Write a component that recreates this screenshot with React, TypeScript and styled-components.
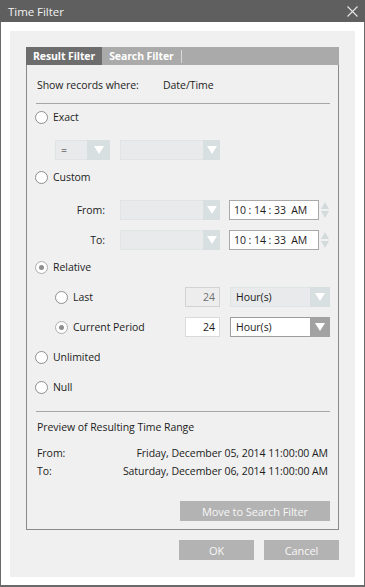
import React from 'react'
import styled, { createGlobalStyle } from 'styled-components'

const GlobalStyle = createGlobalStyle`
	body {
		margin: 0;
		background: #ffffff;
	}
`

const Window = styled.div`
	width: 365px;
	height: 587px;
	box-sizing: border-box;
	display: flex;
	flex-direction: column;
	background: #ffffff;
	border: 1px solid #6a6a6a;
	border-top: none;
	border-bottom-width: 2px;
	font-family: 'Open Sans', 'Noto Sans', sans-serif;
	font-size: 10.5px;
	letter-spacing: -0.05px;
	color: #1c1c1c;
`

const TitleBar = styled.div`
	height: 22px;
	margin: 0 -1px;
	padding: 0 7px 0 8px;
	display: flex;
	align-items: center;
	justify-content: space-between;
	background: #5f5f5f;
	color: #f2f2f2;
	font-size: 11.5px;
`

const Body = styled.div`
	flex: 1;
	padding: 9px 9px 8px 9px;
	display: flex;
`

const Panel = styled.div`
	flex: 1;
	background: #f0f0f0;
	padding: 16px 16px 0 16px;
	display: flex;
	flex-direction: column;
`

const TabHeader = styled.div`
	height: 18px;
	display: flex;
	align-items: stretch;
	background: #aaaaaa;
`

const Tab = styled.div<{ $active?: boolean }>`
	display: flex;
	align-items: center;
	padding: 0 7px 0 7px;
	background: ${(p) => (p.$active ? '#6d6d6d' : 'transparent')};
	color: #ffffff;
	font-weight: 700;
	font-size: 10.5px;
	letter-spacing: -0.1px;
`

const TabDivider = styled.div`
	width: 1px;
	margin: 3px 0 2px 0;
	background: #d8d8d8;
`

const Content = styled.div`
	height: 465px;
	box-sizing: border-box;
	border: 1px solid #8a8a8a;
	border-top: none;
	padding: 0 8px 8px 8px;
	display: flex;
	flex-direction: column;
`

const Row = styled.div<{ $mt?: number; $indent?: number; $h?: number }>`
	height: ${(p) => p.$h ?? 20}px;
	margin-top: ${(p) => p.$mt ?? 0}px;
	padding-left: ${(p) => p.$indent ?? 0}px;
	display: flex;
	align-items: center;
`

const TextRow = styled(Row)`
	padding-left: 2px;
	padding-right: 2px;
	justify-content: space-between;
`

const Separator = styled.div<{ $mt: number }>`
	height: 1px;
	margin: ${(p) => p.$mt}px 0 0 1px;
	background: #a6a6a6;
`

const Field = styled.span<{ $w?: number }>`
	width: ${(p) => (p.$w ? `${p.$w}px` : 'auto')};
	flex-shrink: 0;
`

const RadioLabel = styled.label<{ $w?: number }>`
	display: flex;
	align-items: center;
	gap: 5px;
	width: ${(p) => (p.$w ? `${p.$w}px` : 'auto')};
	flex-shrink: 0;
`

const RadioCircle = styled.span<{ $checked?: boolean }>`
	width: 13px;
	height: 13px;
	box-sizing: border-box;
	border-radius: 50%;
	border: 1px solid ${(p) => (p.$checked ? '#adadad' : '#8e8e8e')};
	background: #ffffff;
	display: flex;
	align-items: center;
	justify-content: center;
	&::after {
		content: '';
		width: 5px;
		height: 5px;
		border-radius: 50%;
		background: ${(p) => (p.$checked ? '#8e8e8e' : 'transparent')};
	}
`

const Combo = styled.div<{ $w: number; $ml?: number; $active?: boolean }>`
	width: ${(p) => p.$w}px;
	height: 20px;
	margin-left: ${(p) => p.$ml ?? 0}px;
	box-sizing: border-box;
	flex-shrink: 0;
	display: flex;
	border: 1px solid ${(p) => (p.$active ? '#9d9d9d' : '#dfe4e5')};
	background: ${(p) => (p.$active ? '#ffffff' : '#e8eaeb')};
`

const ComboText = styled.div`
	flex: 1;
	display: flex;
	align-items: center;
	padding-left: 5px;
	color: #1c1c1c;
`

const ComboArrow = styled.div<{ $w: number; $active?: boolean }>`
	width: ${(p) => p.$w}px;
	margin: -1px -1px -1px 0;
	display: flex;
	align-items: center;
	justify-content: center;
	background: ${(p) => (p.$active ? '#a2a2a2' : '#d8dfe0')};
	&::after {
		content: '';
		border-left: 5px solid transparent;
		border-right: 5px solid transparent;
		border-top: 8px solid #ffffff;
	}
`

const NumberBox = styled.div<{ $disabled?: boolean }>`
	width: 35px;
	height: 20px;
	box-sizing: border-box;
	flex-shrink: 0;
	display: flex;
	align-items: center;
	justify-content: flex-end;
	padding-right: 4px;
	border: 1px solid ${(p) => (p.$disabled ? '#d3d3d3' : '#dadada')};
	background: ${(p) => (p.$disabled ? '#ededed' : '#ffffff')};
	color: ${(p) => (p.$disabled ? '#6f6f6f' : '#1c1c1c')};
`

const TimeBox = styled.div`
	width: 90px;
	height: 20px;
	margin-left: 9px;
	box-sizing: border-box;
	flex-shrink: 0;
	display: flex;
	align-items: center;
	padding-left: 4px;
	border: 1px solid #a9a9a9;
	background: #ffffff;
	white-space: pre;
`

const Spinner = styled.div`
	width: 10px;
	height: 20px;
	margin-left: 1px;
	display: flex;
	flex-direction: column;
	align-items: center;
	justify-content: center;
	gap: 2px;
	&::before,
	&::after {
		content: '';
		border-left: 4px solid transparent;
		border-right: 4px solid transparent;
	}
	&::before {
		border-bottom: 7px solid #d2dadc;
	}
	&::after {
		border-top: 7px solid #d2dadc;
	}
`

const FlatButton = styled.button<{ $w: number }>`
	width: ${(p) => p.$w}px;
	height: 20px;
	padding: 0;
	border: none;
	background: #b3b3b3;
	color: #f7f7f7;
	font-family: inherit;
	font-size: 11px;
	letter-spacing: -0.1px;
`

const MoveButton = styled(FlatButton)`
	margin-top: auto;
	align-self: flex-end;
`

const Footer = styled.div`
	margin-top: 10px;
	display: flex;
	justify-content: flex-end;
	gap: 10px;
`

const Radio = ({ label, checked, w }: { label: string; checked?: boolean; w?: number }) => (
	<RadioLabel $w={w}>
		<RadioCircle $checked={checked} />
		<span>{label}</span>
	</RadioLabel>
)

const Dropdown = ({
	w,
	arrow,
	text,
	active,
	ml,
}: {
	w: number
	arrow: number
	text?: string
	active?: boolean
	ml?: number
}) => (
	<Combo $w={w} $ml={ml} $active={active}>
		<ComboText>{text}</ComboText>
		<ComboArrow $w={arrow} $active={active} />
	</Combo>
)

const CloseIcon = () => (
	<svg width="11" height="11" viewBox="0 0 11 11">
		<path d="M0.5 0.5 L10.5 10.5 M10.5 0.5 L0.5 10.5" stroke="#e6e6e6" strokeWidth="1.1" />
	</svg>
)

export default function App() {
	return (
		<>
			<GlobalStyle />
			<Window>
				<TitleBar>
					<span>Time Filter</span>
					<CloseIcon />
				</TitleBar>
				<Body>
					<Panel>
						<TabHeader>
							<Tab $active>Result Filter</Tab>
							<Tab>Search Filter</Tab>
							<TabDivider />
						</TabHeader>
						<Content>
							<TextRow $mt={10}>
								<Field $w={126}>Show records where:</Field>
								<Field style={{ flex: 1 }}>Date/Time</Field>
							</TextRow>
							<Separator $mt={8} />

							<Row $mt={3}>
								<Radio label="Exact" />
							</Row>
							<Row $mt={13} $indent={20}>
								<Dropdown w={55} arrow={23} text="=" />
								<Dropdown w={100} arrow={17} ml={10} />
							</Row>
							<Row $mt={7}>
								<Radio label="Custom" />
							</Row>
							<Row $mt={13}>
								<Field $w={70} style={{ textAlign: 'right' }}>From:</Field>
								<Dropdown w={100} arrow={17} ml={15} />
								<TimeBox>{'10 : 14 : 33  AM'}</TimeBox>
								<Spinner />
							</Row>
							<Row $mt={10}>
								<Field $w={70} style={{ textAlign: 'right' }}>To:</Field>
								<Dropdown w={100} arrow={17} ml={15} />
								<TimeBox>{'10 : 14 : 33  AM'}</TimeBox>
								<Spinner />
							</Row>
							<Row $mt={7}>
								<Radio label="Relative" checked />
							</Row>
							<Row $mt={10} $indent={20}>
								<Radio label="Last" w={130} />
								<NumberBox $disabled>24</NumberBox>
								<Dropdown w={100} arrow={20} ml={10} text="Hour(s)" />
							</Row>
							<Row $mt={10} $indent={20}>
								<Radio label="Current Period" checked w={130} />
								<NumberBox>24</NumberBox>
								<Dropdown w={100} arrow={20} ml={10} text="Hour(s)" active />
							</Row>
							<Row $mt={10}>
								<Radio label="Unlimited" />
							</Row>
							<Row $mt={10}>
								<Radio label="Null" />
							</Row>
							<Separator $mt={14} />

							<TextRow $mt={7} $h={16}>
								<span>Preview of Resulting Time Range</span>
							</TextRow>
							<TextRow $mt={10} $h={16}>
								<span>From:</span>
								<span>Friday, December 05, 2014 11:00:00 AM</span>
							</TextRow>
							<TextRow $mt={2} $h={16}>
								<span>To:</span>
								<span>Saturday, December 06, 2014 11:00:00 AM</span>
							</TextRow>

							<MoveButton $w={150}>Move to Search Filter</MoveButton>
						</Content>
						<Footer>
							<FlatButton $w={75}>OK</FlatButton>
							<FlatButton $w={75}>Cancel</FlatButton>
						</Footer>
					</Panel>
				</Body>
			</Window>
		</>
	)
}
